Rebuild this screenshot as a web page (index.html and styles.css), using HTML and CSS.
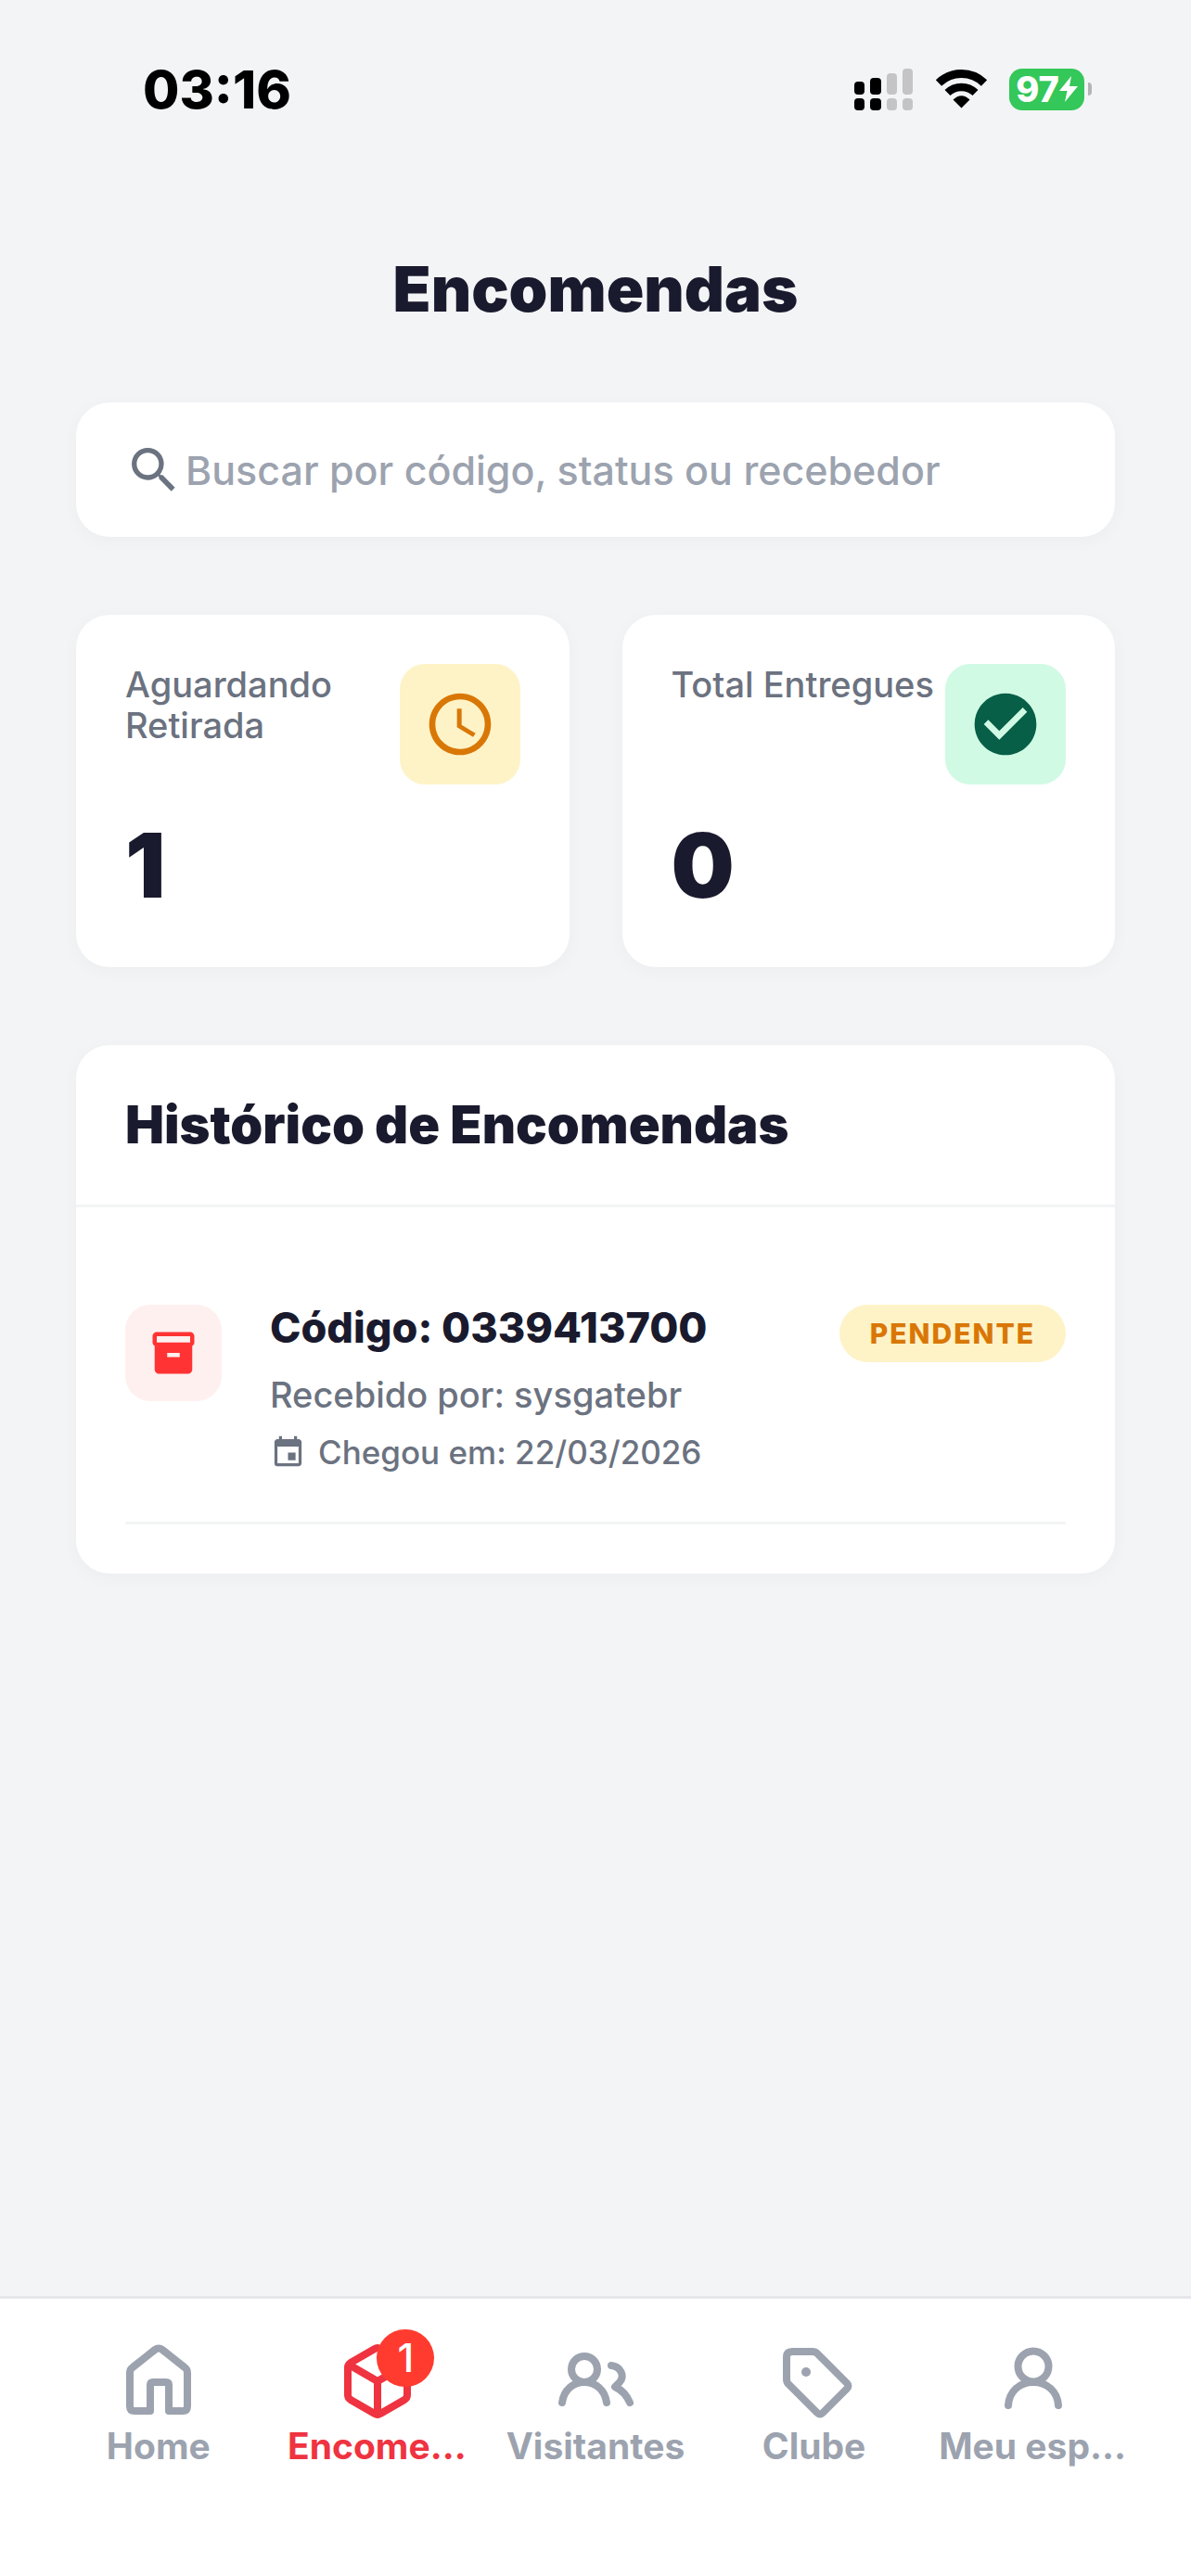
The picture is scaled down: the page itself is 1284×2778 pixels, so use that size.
FILE: index.html
```
<!DOCTYPE html>
<html lang="pt-BR">
<head>
    <meta charset="utf-8">
    <meta name="viewport" content="width=device-width, initial-scale=1">
    <title>Encomendas</title>
    <link rel="stylesheet" href="styles.css">
</head>
<body>
    <div class="status-bar">
        <span class="time">03:16</span>
        <div class="status-icons">
            <svg width="64" height="45" viewBox="0 0 64 45">
                <rect x="0" y="14" width="11" height="14" rx="4"/>
                <rect x="17" y="10" width="12" height="18" rx="4"/>
                <rect x="0" y="32" width="11" height="13" rx="4"/>
                <rect x="17" y="32" width="12" height="13" rx="4"/>
                <g fill="#c4c4c6">
                    <rect x="35" y="5" width="11" height="23" rx="4"/>
                    <rect x="52" y="0" width="11" height="28" rx="4"/>
                    <rect x="35" y="32" width="11" height="13" rx="4"/>
                    <rect x="52" y="32" width="11" height="13" rx="4"/>
                </g>
            </svg>
            <svg width="55" height="42" viewBox="0 0 55 42">
                <g fill="none" stroke="#000">
                    <path d="M3 14.500a35 35 0 0 1 49 0" stroke-width="9"/>
                    <path d="M12.500 25a21.500 21.500 0 0 1 30 0" stroke-width="8.500"/>
                </g>
                <path d="M27.500 41.500L18.500 32.500Q27.500 24 36.500 32.500Z"/>
            </svg>
            <div class="battery">
                <div class="battery-level">
                    <span>97</span>
                    <svg width="20" height="28" viewBox="0 0 20 28"><path d="M13 0L0 16h8.500L6 28 20 11h-9z" fill="#fff"/></svg>
                </div>
                <div class="battery-tip"></div>
            </div>
        </div>
    </div>

    <main class="content">
        <h1>Encomendas</h1>

        <label class="search">
            <svg width="64" height="64" viewBox="0 0 24 24"><path d="M15.500 14h-.79l-.28-.27A6.471 6.471 0 0 0 16 9.500 6.500 6.500 0 1 0 9.500 16c1.610 0 3.090-.59 4.230-1.570l.27.28v.79l5 4.990L20.490 19l-4.990-5zm-6 0C7.010 14 5 11.990 5 9.500S7.010 5 9.500 5 14 7.010 14 9.500 11.990 14 9.500 14z" fill="#6b7280"/></svg>
            <input type="text" placeholder="Buscar por código, status ou recebedor" aria-label="Buscar">
        </label>

        <div class="stats">
            <div class="card stat">
                <div class="stat-top">
                    <span class="stat-label">Aguardando Retirada</span>
                    <div class="stat-icon waiting">
                        <svg width="80" height="80" viewBox="0 0 24 24" fill="#d97706"><path d="M11.990 2C6.470 2 2 6.480 2 12s4.470 10 9.990 10C17.520 22 22 17.520 22 12S17.520 2 11.990 2zM12 20c-4.420 0-8-3.580-8-8s3.580-8 8-8 8 3.580 8 8-3.580 8-8 8z"/><path d="M12.500 7H11v6l5.250 3.150.75-1.230-4.500-2.670z"/></svg>
                    </div>
                </div>
                <div class="stat-value">1</div>
            </div>
            <div class="card stat">
                <div class="stat-top">
                    <span class="stat-label">Total Entregues</span>
                    <div class="stat-icon delivered">
                        <svg width="80" height="80" viewBox="0 0 24 24" fill="#065f46"><path d="M12 2C6.480 2 2 6.480 2 12s4.480 10 10 10 10-4.480 10-10S17.520 2 12 2zm-2 15l-5-5 1.410-1.410L10 14.170l7.590-7.590L19 8l-9 9z"/></svg>
                    </div>
                </div>
                <div class="stat-value">0</div>
            </div>
        </div>

        <section class="card history">
            <h2>Histórico de Encomendas</h2>
            <div class="history-list">
                <div class="package">
                    <div class="package-icon">
                        <svg width="54" height="54" viewBox="0 0 24 24"><path d="M20 2H4c-1 0-2 .9-2 2v3.010c0 .72.43 1.340 1 1.690V20c0 1.100 1.100 2 2 2h14c.9 0 2-.9 2-2V8.700c.57-.35 1-.97 1-1.690V4c0-1.100-1-2-2-2zm-5 12H9v-2h6v2zm5-7H4V4h16v3z" fill="#ff3333"/></svg>
                    </div>
                    <div class="package-info">
                        <div class="package-code">Código: 0339413700</div>
                        <div class="package-receiver">Recebido por: sysgatebr</div>
                        <div class="package-date">
                            <svg width="39" height="39" viewBox="0 0 24 24"><path d="M17 12h-5v5h5v-5zM16 1v2H8V1H6v2H5c-1.110 0-1.990.9-1.990 2L3 19a2 2 0 0 0 2 2h14c1.100 0 2-.9 2-2V5c0-1.100-.9-2-2-2h-1V1h-2zm3 18H5V8h14v11z" fill="#6b7280"/></svg>
                            <span>Chegou em: 22/03/2026</span>
                        </div>
                    </div>
                    <span class="package-status">PENDENTE</span>
                </div>
            </div>
        </section>
    </main>

    <nav class="tab-bar">
        <a href="#" class="tab">
            <svg width="80" height="80" viewBox="0 0 80 80"><path d="M9 31q0-4 3-6L36 6q4-3 8 0L68 25q3 2 3 6V67q0 5-5 5H51V44q0-3-3-3H34q-3 0-3 3V72H14q-5 0-5-5z"/></svg>
            <span>Home</span>
        </a>
        <a href="#" class="tab active">
            <span class="tab-icon">
                <svg width="80" height="80" viewBox="0 0 80 80"><path d="M38 5q3-2 6 0L70 20q3 2 3 5V55q0 3-3 5L44 75q-3 2-6 0L12 60q-3-2-3-5V25q0-3 3-5zM10 22L41 40 72 22M41 40V76"/></svg>
                <span class="tab-badge">1</span>
            </span>
            <span>Encome...</span>
        </a>
        <a href="#" class="tab">
            <svg width="80" height="80" viewBox="0 0 80 80"><circle cx="28" cy="27" r="14"/><path d="M4 63C6 49 16 41 28 41S50 49 52 63M57 23C67 24 72 34 66 41L61 46Q72 51 77 63"/></svg>
            <span>Visitantes</span>
        </a>
        <a href="#" class="tab">
            <svg width="80" height="80" viewBox="0 0 80 80"><path d="M10 14q0-6 6-6H38q3 0 5 2L75 42q3 3 0 6L49 74q-3 3-6 0L12 43q-2-2-2-5z"/><circle class="dot" cx="31" cy="30" r="5"/></svg>
            <span>Clube</span>
        </a>
        <a href="#" class="tab">
            <svg width="80" height="80" viewBox="0 0 80 80"><circle cx="41" cy="24" r="16.500"/><path d="M14 66C15 51 26 41 41 41S67 51 68 66"/></svg>
            <span>Meu esp...</span>
        </a>
    </nav>
</body>
</html>
```
FILE: styles.css
```
* {
    box-sizing: border-box;
}
body {
    margin: 0;
    min-height: 100vh;
    display: flex;
    flex-direction: column;
    background-color: #f3f4f6;
    color: #1a1a2e;
    font-family: Inter, "Liberation Sans", sans-serif;
}
svg {
    display: block;
    flex-shrink: 0;
    overflow: visible;
}
h1, h2 {
    margin: 0;
    font-weight: 900;
}

/* status bar */
.status-bar {
    display: flex;
    justify-content: space-between;
    align-items: center;
    height: 192px;
    padding: 0 107px 0 154px;
    color: #000;
}
.time {
    font-size: 57px;
    font-weight: 800;
}
.status-icons {
    display: flex;
    align-items: center;
    gap: 24px;
}
.battery {
    display: flex;
    align-items: center;
    gap: 4px;
}
.battery-level {
    display: flex;
    align-items: center;
    justify-content: center;
    width: 81px;
    height: 45px;
    border-radius: 14px;
    background-color: #34c759;
    color: #fff;
    font-size: 38px;
    font-weight: 800;
}
.battery-tip {
    width: 4px;
    height: 14px;
    border-radius: 0 4px 4px 0;
    background-color: #b4b4b8;
}

/* content */
.content {
    flex: 1;
    display: flex;
    flex-direction: column;
    gap: 84px;
    padding: 82px 82px 80px;
}
h1 {
    font-size: 67px;
    line-height: 76px;
    text-align: center;
}
.search {
    display: flex;
    align-items: center;
    gap: 2px;
    height: 145px;
    padding: 0 52px;
    border-radius: 36px;
    background-color: #fff;
    box-shadow: 0 4px 20px rgba(0, 0, 0, 0.03);
}
.search input {
    flex: 1;
    min-width: 0;
    padding: 0;
    border: none;
    outline: none;
    background: none;
    font-family: inherit;
    font-size: 43px;
    font-weight: 500;
    color: #1a1a2e;
}
.search input::placeholder {
    color: #9ca3af;
}
.card {
    border-radius: 36px;
    background-color: #fff;
    box-shadow: 0 4px 20px rgba(0, 0, 0, 0.03);
}

.stats {
    display: grid;
    grid-template-columns: 1fr 1fr;
    gap: 57px;
}
.stat {
    padding: 53px 53px 50px;
}
.stat-top {
    display: flex;
    justify-content: space-between;
    align-items: flex-start;
    margin-bottom: 27px;
}
.stat-label {
    font-size: 38px;
    font-weight: 500;
    line-height: 44px;
    color: #6b7280;
}
.stat-icon {
    display: flex;
    align-items: center;
    justify-content: center;
    flex-shrink: 0;
    width: 130px;
    height: 130px;
    border-radius: 27px;
}
.waiting {
    background-color: #fef3c7;
}
.delivered {
    background-color: #d1fae5;
}
.stat-value {
    font-size: 96px;
    font-weight: 900;
    line-height: 120px;
}

.history h2 {
    padding: 53px;
    border-bottom: 3px solid #f3f4f6;
    font-size: 56px;
    line-height: 66px;
}
.history-list {
    padding: 52px 53px 53px;
}
.package {
    display: flex;
    align-items: flex-start;
    padding: 53px 0;
    border-bottom: 3px solid #f3f4f6;
}
.package-icon {
    display: flex;
    align-items: center;
    justify-content: center;
    width: 104px;
    height: 104px;
    margin-right: 52px;
    border-radius: 27px;
    background-color: #fff0f0;
}
.package-info {
    flex: 1;
    color: #6b7280;
    font-weight: 500;
}
.package-code {
    margin-bottom: 25px;
    font-size: 45px;
    font-weight: 800;
    line-height: 50px;
    color: #1a1a2e;
}
.package-receiver {
    margin-bottom: 18px;
    font-size: 38px;
    line-height: 44px;
}
.package-date {
    display: flex;
    align-items: center;
    gap: 13px;
    font-size: 35px;
    line-height: 44px;
}
.package-status {
    padding: 0 33px;
    border-radius: 31px;
    background-color: #fef3c7;
    font-size: 30px;
    font-weight: 800;
    line-height: 62px;
    letter-spacing: 2px;
    color: #d97706;
}

/* bottom tabs */
.tab-bar {
    display: grid;
    grid-template-columns: repeat(5, 1fr);
    padding: 49px 53px 116px;
    border-top: 3px solid #e5e7eb;
    background-color: #fff;
}
.tab {
    display: flex;
    flex-direction: column;
    align-items: center;
    gap: 6px;
    color: #9ca3af;
    font-size: 39px;
    font-weight: 700;
    line-height: 48px;
    text-decoration: none;
    white-space: nowrap;
}
.tab svg {
    fill: none;
    stroke: currentColor;
    stroke-width: 8;
    stroke-linecap: round;
    stroke-linejoin: round;
}
.tab .dot {
    fill: currentColor;
    stroke: none;
}
.active {
    color: #ef3340;
}
.tab-icon {
    position: relative;
}
.tab-badge {
    position: absolute;
    top: -16px;
    left: 40px;
    width: 62px;
    height: 62px;
    border-radius: 50%;
    background-color: #ff3b30;
    color: #fff;
    font-size: 43px;
    font-weight: 500;
    line-height: 60px;
    text-align: center;
}
```
